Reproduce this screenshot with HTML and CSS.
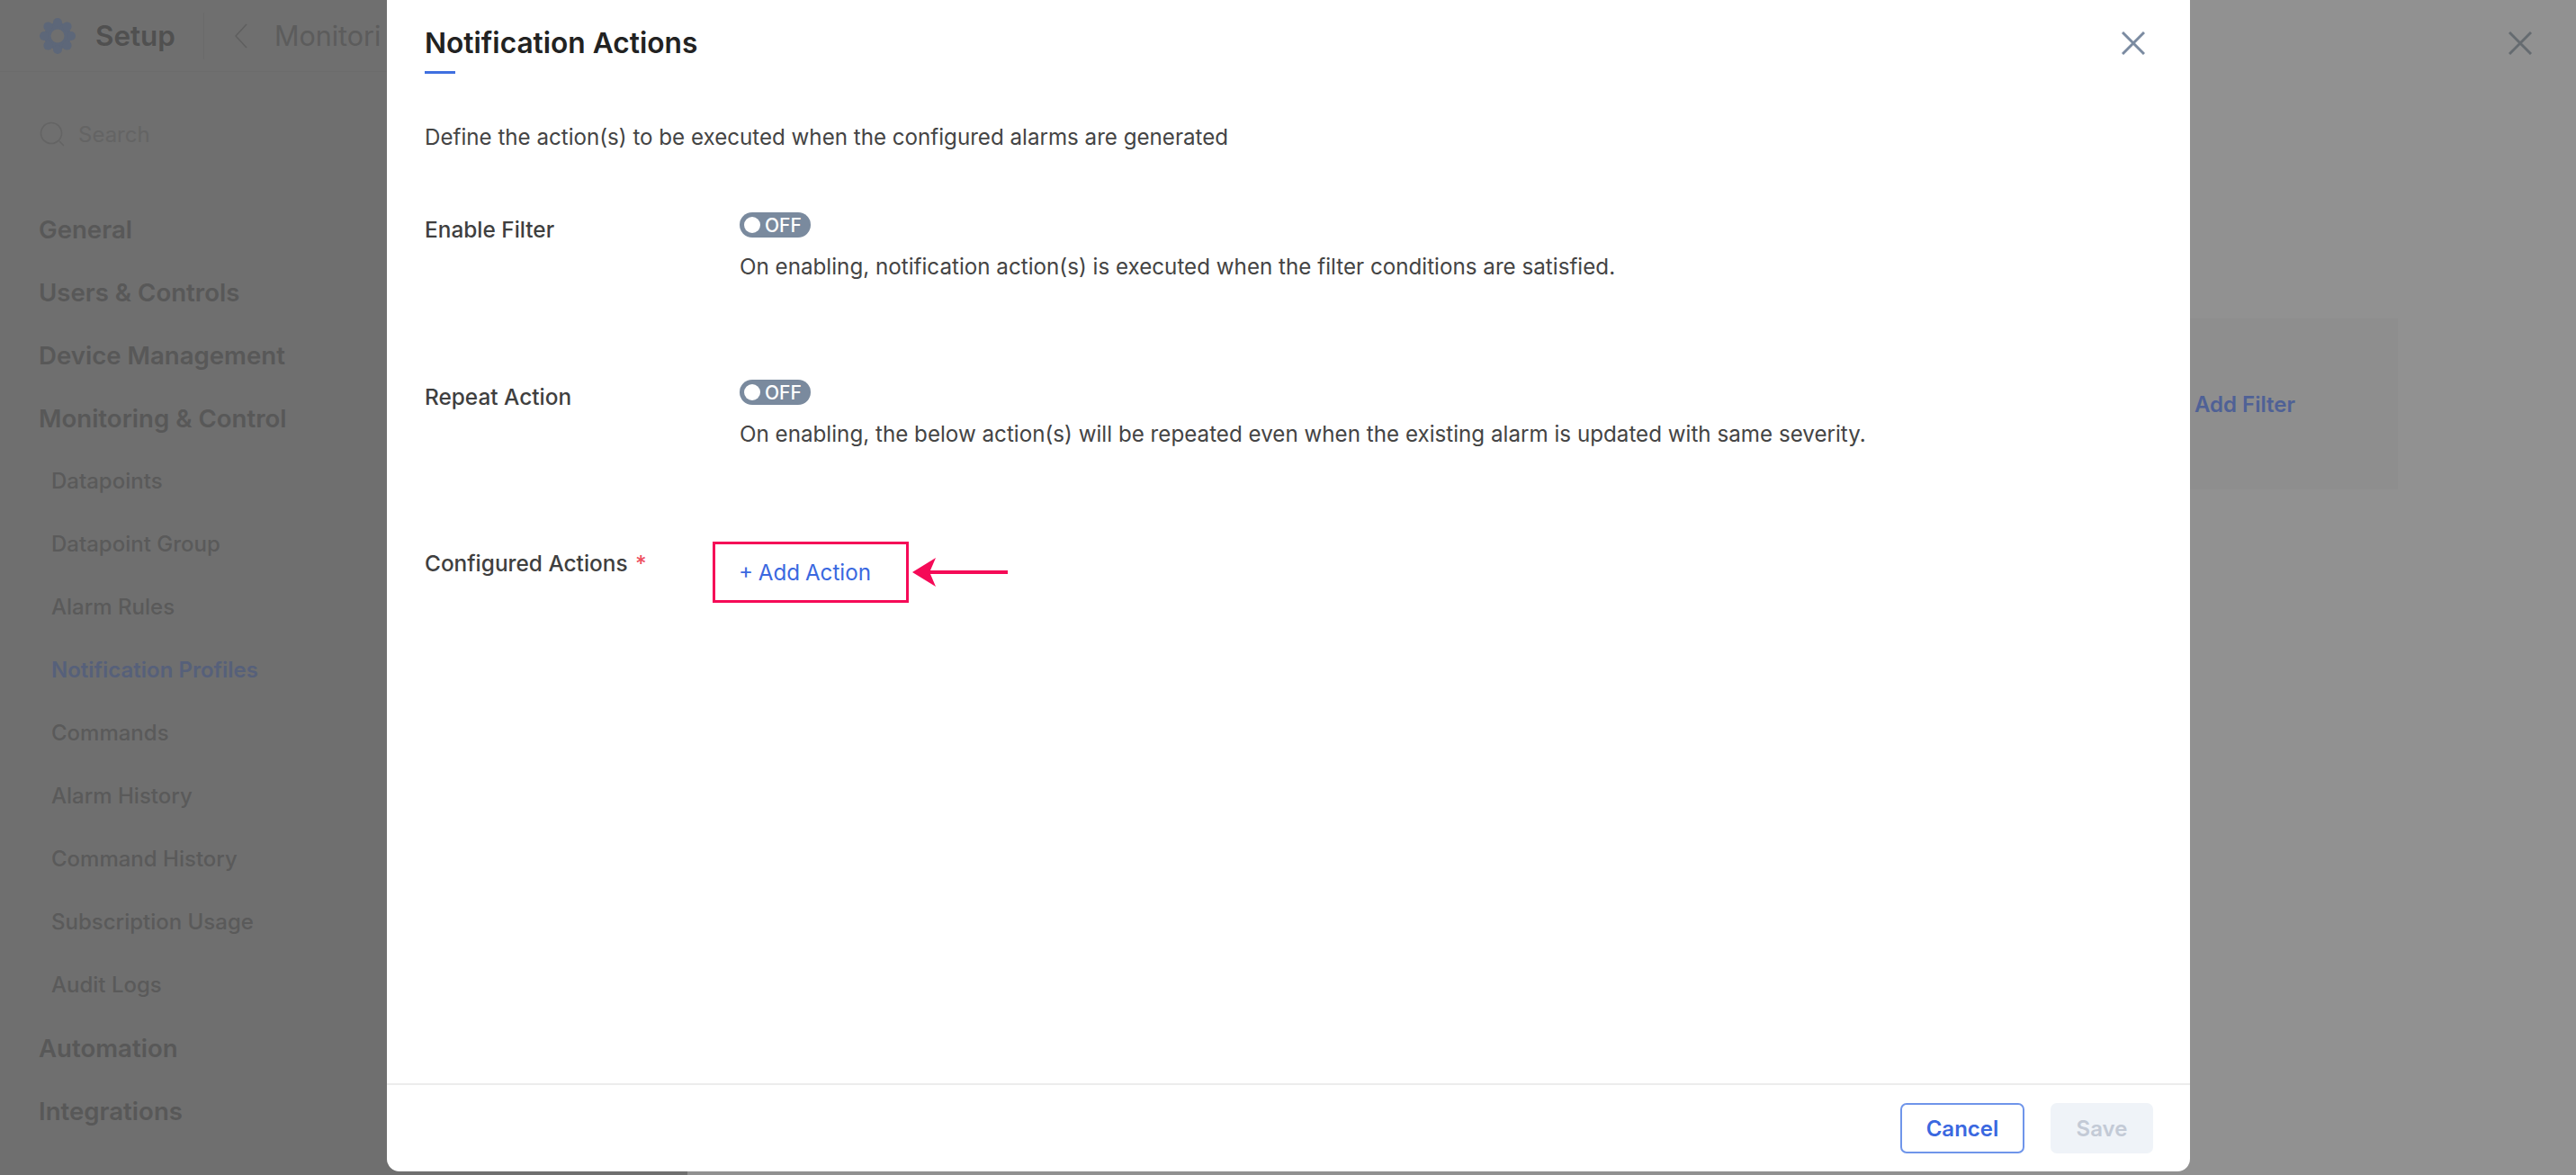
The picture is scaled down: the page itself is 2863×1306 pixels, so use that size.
FILE: index.html
```html
<!DOCTYPE html>
<html lang="en">
<head>
  <meta charset="UTF-8" />
  <title>Notification Actions</title>
  <link rel="stylesheet" href="styles.css">
</head>
<body>

<div class="page">
  <!-- Dimmed setup page behind the dialog -->
  <aside class="sidebar">
    <div class="topbar">
      <svg class="gear" viewBox="0 0 40 40">
        <g fill="#5d6779">
          <circle cx="20" cy="20" r="15"/>
          <circle cx="20" cy="5" r="5"/>
          <circle cx="20" cy="35" r="5"/>
          <circle cx="5" cy="20" r="5"/>
          <circle cx="35" cy="20" r="5"/>
          <circle cx="9.4" cy="9.4" r="5"/>
          <circle cx="30.6" cy="9.4" r="5"/>
          <circle cx="9.4" cy="30.6" r="5"/>
          <circle cx="30.6" cy="30.6" r="5"/>
        </g>
        <circle cx="20" cy="20" r="7.5" fill="#6f6f6f"/>
      </svg>
      <span class="topbar-title">Setup</span>
      <span class="topbar-divider"></span>
      <svg class="chevron" viewBox="0 0 14 28"><path d="M13 1 1 14l12 13" fill="none" stroke="#5f5f5f" stroke-width="1.6"/></svg>
      <span class="crumb">Monitori</span>
    </div>

    <div class="search">
      <svg class="search-icon" viewBox="0 0 28 28"><circle cx="13" cy="13" r="11.5" fill="none" stroke="#646464" stroke-width="1.6"/><path d="m22 22 5 5" stroke="#646464" stroke-width="1.6"/></svg>
      <span>Search</span>
    </div>

    <nav class="nav">
      <div class="nav-group">General</div>
      <div class="nav-group">Users &amp; Controls</div>
      <div class="nav-group">Device Management</div>
      <div class="nav-group">Monitoring &amp; Control</div>
      <div class="nav-item">Datapoints</div>
      <div class="nav-item">Datapoint Group</div>
      <div class="nav-item">Alarm Rules</div>
      <div class="nav-item active">Notification Profiles</div>
      <div class="nav-item">Commands</div>
      <div class="nav-item">Alarm History</div>
      <div class="nav-item">Command History</div>
      <div class="nav-item">Subscription Usage</div>
      <div class="nav-item">Audit Logs</div>
      <div class="nav-group">Automation</div>
      <div class="nav-group">Integrations</div>
    </nav>
  </aside>

  <main class="content">
    <div class="content-head">
      <svg class="close-icon" viewBox="0 0 26 26"><path d="M1 1l24 24M25 1 1 25" stroke="#656b70" stroke-width="3"/></svg>
    </div>
    <div class="filter-panel">
      <span class="filter-link">Add Filter</span>
    </div>
  </main>
</div>

<div class="modal">
  <div class="modal-head">
    <div>
      <h2 class="modal-title">Notification Actions</h2>
      <div class="title-line"></div>
    </div>
    <svg class="close-icon" viewBox="0 0 26 26"><path d="M1 1l24 24M25 1 1 25" stroke="#7b8ba1" stroke-width="3"/></svg>
  </div>

  <div class="modal-body">
    <p class="intro">Define the action(s) to be executed when the configured alarms are generated</p>

    <div class="form-row first">
      <div class="form-label">Enable Filter</div>
      <div>
        <div class="toggle"><span class="knob"></span>OFF</div>
        <p class="hint">On enabling, notification action(s) is executed when the filter conditions are satisfied.</p>
      </div>
    </div>

    <div class="form-row second">
      <div class="form-label">Repeat Action</div>
      <div>
        <div class="toggle"><span class="knob"></span>OFF</div>
        <p class="hint">On enabling, the below action(s) will be repeated even when the existing alarm is updated with same severity.</p>
      </div>
    </div>

    <div class="form-row third">
      <div class="form-label">Configured Actions <span class="required">*</span></div>
      <div class="action-wrap">
        <div class="add-box"><span class="add-link">+ Add Action</span></div>
        <svg class="arrow" viewBox="0 0 106 32"><path d="M0 16 26 0l-6 14h86v4H20l6 14z" fill="#f50a57"/></svg>
      </div>
    </div>
  </div>

  <div class="modal-foot">
    <button class="btn btn-cancel">Cancel</button>
    <button class="btn btn-save">Save</button>
  </div>
</div>

</body>
</html>
```

FILE: styles.css
```css
* {
  box-sizing: border-box;
}

body {
  margin: 0;
  height: 1306px;
  overflow: hidden;
  font-family: Inter, "Noto Sans", sans-serif;
  background: #919191;
  position: relative;
}

.page {
  display: flex;
  height: 1306px;
}

/* sidebar */
.sidebar {
  width: 764px;
  background: #6f6f6f;
  flex-shrink: 0;
  overflow: hidden;
}

.topbar {
  display: flex;
  align-items: center;
  height: 80px;
  padding-left: 44px;
  border-bottom: 1px solid #6c6c6c;
}

.gear {
  width: 40px;
  height: 40px;
}

.topbar-title {
  margin-left: 22px;
  font-size: 31.4px;
  font-weight: 600;
  color: #505050;
}

.topbar-divider {
  width: 1px;
  height: 52px;
  margin-left: 31px;
  background: #6a6a6a;
}

.chevron {
  width: 14px;
  height: 28px;
  margin-left: 34px;
}

.crumb {
  margin-left: 30px;
  font-size: 30.5px;
  color: #5c5c5c;
  white-space: nowrap;
}

.search {
  display: flex;
  align-items: center;
  gap: 15px;
  height: 28px;
  margin: 55px 0 0 44px;
  font-size: 24px;
  color: #646464;
}

.search-icon {
  width: 28px;
  height: 28px;
}

.nav {
  margin-top: 57px;
}

.nav-group {
  height: 70px;
  line-height: 70px;
  padding-left: 43px;
  font-size: 27.6px;
  font-weight: 600;
  color: #585858;
}

.nav-item {
  height: 70px;
  line-height: 70px;
  padding-left: 57px;
  font-size: 24px;
  font-weight: 500;
  color: #5a5a5a;
}

.nav-item.active {
  color: #56607a;
  font-weight: 600;
}

/* page behind the dialog */
.content {
  flex: 1;
}

.content-head {
  display: flex;
  justify-content: flex-end;
  height: 354px;
  padding: 35px 49px 0 0;
}

.close-icon {
  width: 26px;
  height: 26px;
}

.filter-panel {
  display: flex;
  align-items: center;
  justify-content: flex-end;
  height: 190px;
  margin-right: 198px;
  padding-right: 114px;
  background: #8e8e8e;
}

.filter-link {
  font-size: 24px;
  font-weight: 600;
  color: #4f6196;
}

/* dialog */
.modal {
  position: absolute;
  left: 430px;
  top: 0;
  width: 2004px;
  height: 1302px;
  display: flex;
  flex-direction: column;
  background: #fff;
  border-radius: 0 0 14px 14px;
}

.modal-head {
  display: flex;
  justify-content: space-between;
  padding: 30px 50px 0 42px;
}

.modal-head .close-icon {
  margin-top: 5px;
}

.modal-title {
  margin: 0;
  font-size: 31.7px;
  line-height: 36px;
  font-weight: 600;
  color: #222;
}

.title-line {
  width: 34px;
  height: 3px;
  margin-top: 13px;
  background: #3f6fe0;
}

.modal-body {
  flex: 1;
  padding: 0 42px;
}

.intro {
  margin: 55px 0 0;
  font-size: 24.15px;
  line-height: 32px;
  color: #444;
}

.form-row {
  display: grid;
  grid-template-columns: 350px 1fr;
}

.form-row.first {
  margin-top: 67px;
}

.form-row.second {
  margin-top: 109px;
}

.form-row.third {
  margin-top: 108px;
}

.form-label {
  padding-top: 3px;
  font-size: 24.4px;
  line-height: 32px;
  font-weight: 500;
  color: #3f3f3f;
}

.required {
  color: #ee4d5f;
  margin-left: 2px;
}

.toggle {
  display: flex;
  align-items: center;
  width: 79px;
  height: 28px;
  padding-left: 5px;
  border-radius: 14px;
  background: #7a8a9e;
  font-size: 21px;
  font-weight: 500;
  color: #fff;
}

.knob {
  width: 18px;
  height: 18px;
  margin-right: 5px;
  border-radius: 50%;
  background: #fff;
}

.hint {
  margin: 17px 0 0;
  font-size: 24.2px;
  line-height: 32px;
  color: #444;
}

.action-wrap {
  display: flex;
  align-items: center;
  margin: -5px 0 0 -30px;
}

.add-box {
  display: flex;
  align-items: center;
  width: 218px;
  height: 68px;
  padding-left: 26px;
  border: 3px solid #f50a57;
}

.add-link {
  font-size: 24.2px;
  word-spacing: -1px;
  color: #3a68e0;
  white-space: nowrap;
}

.arrow {
  width: 106px;
  height: 32px;
  margin-left: 4px;
}

.modal-foot {
  display: flex;
  justify-content: flex-end;
  gap: 29px;
  height: 98px;
  padding: 20px 41px 0 0;
  border-top: 2px solid #ececec;
}

.btn {
  height: 56px;
  border-radius: 7px;
  font-family: inherit;
  font-size: 24px;
  font-weight: 600;
}

.btn-cancel {
  width: 138px;
  background: #fff;
  border: 2px solid #6f95ea;
  color: #3a68e0;
}

.btn-save {
  width: 114px;
  background: #eff3f8;
  border: 0;
  color: #c3cad6;
}
```
